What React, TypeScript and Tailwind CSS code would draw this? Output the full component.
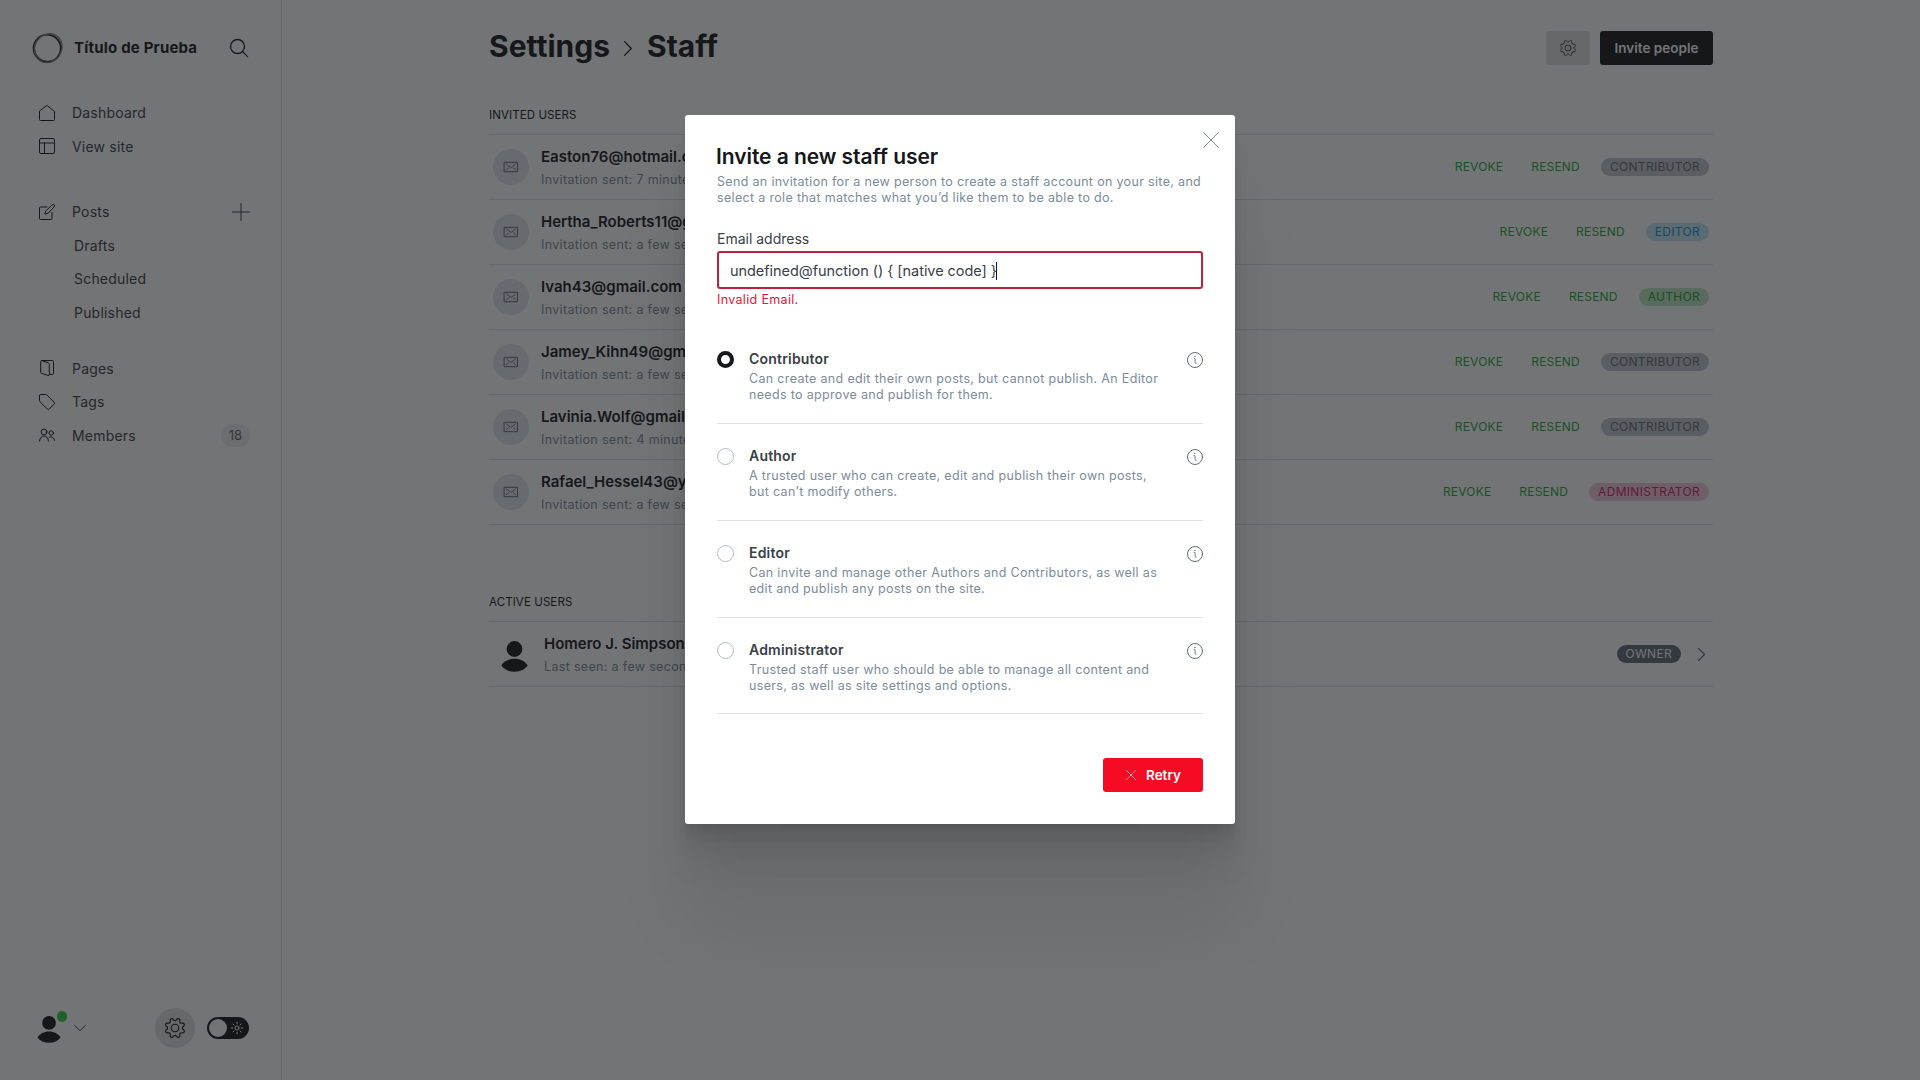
import React from "react";

const GEAR =
  "M10.546 2.438a1.957 1.957 0 0 0 2.908 0L14.4 1.4a1.959 1.959 0 0 1 3.41 1.413l-.071 1.4a1.958 1.958 0 0 0 2.051 2.054l1.4-.071a1.959 1.959 0 0 1 1.41 3.41l-1.042.94a1.96 1.96 0 0 0 0 2.909l1.042.94a1.959 1.959 0 0 1-1.413 3.41l-1.4-.071a1.958 1.958 0 0 0-2.056 2.056l.071 1.4A1.959 1.959 0 0 1 14.4 22.6l-.941-1.041a1.959 1.959 0 0 0-2.908 0L9.606 22.6A1.959 1.959 0 0 1 6.2 21.192l.072-1.4a1.958 1.958 0 0 0-2.056-2.056l-1.4.071A1.958 1.958 0 0 1 1.4 14.4l1.041-.94a1.96 1.96 0 0 0 0-2.909L1.4 9.606A1.958 1.958 0 0 1 2.809 6.2l1.4.071a1.958 1.958 0 0 0 2.058-2.06L6.2 2.81A1.959 1.959 0 0 1 9.606 1.4z";

type IconProps = { className?: string; box?: string; width?: number; children: React.ReactNode };

function Icon({ className = "size-4", box = "0 0 16 16", width = 1, children }: IconProps) {
  return (
    <svg
      className={`block shrink-0 overflow-visible ${className}`}
      viewBox={box}
      fill="none"
      stroke="currentColor"
      strokeWidth={width}
      strokeLinecap="round"
      strokeLinejoin="round"
    >
      {children}
    </svg>
  );
}

const Gear = ({ className, width }: { className: string; width: number }) => (
  <Icon className={className} box="0 0 24 24" width={width}>
    <path d={GEAR} />
    <circle cx="12" cy="12" r="4.5" />
  </Icon>
);

const Person = ({ className }: { className: string }) => (
  <svg className={`block shrink-0 ${className}`} viewBox="0 0 27 31" fill="#15171a">
    <circle cx="13.5" cy="8" r="7.9" />
    <path d="M.3 24.6C3 20.3 7.500 17.800 13.500 17.800s10.500 2.500 13.200 6.800c-2.900 3.900-7.500 6.200-13.200 6.200S3.200 28.500.3 24.600z" />
  </svg>
);

function NavItem({ icon, label, children }: { icon: React.ReactNode; label: string; children?: React.ReactNode }) {
  return (
    <div className="flex h-[33.5px] items-center pl-[39px] pr-[31px]">
      <span className="w-[33px] text-[#15171a]">{icon}</span>
      <span className="flex-1 tracking-[0.2px]">{label}</span>
      {children}
    </div>
  );
}

function Sidebar() {
  return (
    <aside className="flex w-[282px] shrink-0 flex-col border-r border-[#e6e9eb] text-[14px] text-[#394047]">
      <div className="mt-[31px] flex h-[34px] items-center pl-8">
        <Icon className="size-8" box="0 0 32 32" width={1.2}>
          <circle cx="15" cy="16.300" r="13.600" stroke="#15171a" strokeWidth="1.400" />
          <circle cx="16" cy="15.800" r="13.600" stroke="#3c4044" strokeWidth="1" />
          <ellipse cx="16.300" cy="16" rx="13.300" ry="15" stroke="#7b8086" strokeWidth="1.200" transform="rotate(35 16 16)" />
        </Icon>
        <span className="ml-[10px] w-[155.5px] text-[15px] font-bold tracking-[0.2px] text-[#15171a]">Título de Prueba</span>
        <Icon className="size-[18px] text-[#15171a]" box="0 0 18 18" width={1.3}>
          <circle cx="7.500" cy="7.500" r="7" />
          <path d="M12.600 12.600l5 5" />
        </Icon>
      </div>
      <nav className="mt-[31px]">
        <NavItem
          label="Dashboard"
          icon={
            <Icon>
              <path d="M.5 6.500v8a1 1 0 0 0 1 1h13a1 1 0 0 0 1-1v-8L8.600.800a1 1 0 0 0-1.200 0z" />
            </Icon>
          }
        />
        <NavItem
          label="View site"
          icon={
            <Icon>
              <rect x=".5" y=".5" width="15" height="15" rx="1.500" />
              <path d="M.5 5h15M5.500 5v10.500" />
            </Icon>
          }
        />
        <div className="h-8" />
        <NavItem
          label="Posts"
          icon={
            <Icon>
              <path d="M8 3H1.500a1 1 0 0 0-1 1v10.500a1 1 0 0 0 1 1H12a1 1 0 0 0 1-1V8.500" />
              <path d="M8.800 9.300l-3 .9.800-3.100 6.600-6.300a1.350 1.350 0 0 1 2 2z" />
            </Icon>
          }
        >
          <Icon className="size-[18px] text-[#394047]" box="0 0 18 18">
            <path d="M9 .5v17M.5 9h17" />
          </Icon>
        </NavItem>
        {["Drafts", "Scheduled", "Published"].map((label) => (
          <div key={label} className="flex h-[33.5px] items-center pl-[74px] tracking-[0.2px]">
            {label}
          </div>
        ))}
        <div className="h-[22.5px]" />
        <NavItem
          label="Pages"
          icon={
            <Icon className="-mt-px size-4">
              <path d="M2.500.5h11a1 1 0 0 1 1 1v12a1 1 0 0 1-1 1h-3" />
              <path d="M2.500.5l6.800 2.300a1.500 1.500 0 0 1 1 1.400v10.500a.9.900 0 0 1-1.200.8l-6.600-2.200a1 1 0 0 1-.8-1V1.500a1 1 0 0 1 .8-1z" />
            </Icon>
          }
        />
        <NavItem
          label="Tags"
          icon={
            <Icon>
              <path d="M.5 1.500v5c0 .5.200.9.500 1.300l7.300 7.200a1.300 1.300 0 0 0 1.900 0l4.900-4.900a1.300 1.300 0 0 0 0-1.900L7.900 1a1.700 1.700 0 0 0-1.300-.5h-5a1 1 0 0 0-1.100 1z" />
            </Icon>
          }
        />
        <NavItem
          label="Members"
          icon={
            <Icon>
              <circle cx="5" cy="5" r="2.900" />
              <circle cx="12.200" cy="6" r="2.200" />
              <path d="M.5 14c.3-3 2-5 4.500-5s4.200 2 4.500 5M10.500 10.200c2.700-.9 4.800.6 5 3.300" />
            </Icon>
          }
        >
          <span className="flex h-[23px] w-[29px] items-center justify-center rounded-full bg-[#ebeef0] text-[13px] text-[#626d79]">
            18
          </span>
        </NavItem>
      </nav>
      <div className="mb-8 mt-auto flex h-10 items-center pl-8">
        <div className="relative flex size-[34px] items-center justify-center rounded-full">
          <Person className="mt-0.5 h-[27px] w-[24px]" />
          <span className="absolute -right-px top-0 size-[10.5px] rounded-full bg-[#30cf43]" />
        </div>
        <Icon className="ml-2 h-1.5 w-3 text-[#394047]" box="0 0 12 6">
          <path d="M.5.3L6 5.700 11.500.3" />
        </Icon>
        <div className="ml-[69px] flex size-10 items-center justify-center rounded-full bg-[#dfe1e3] text-[#15171a]">
          <Gear className="size-5" width={1.4} />
        </div>
        <div className="ml-3 flex h-[22px] w-[42px] items-center justify-between rounded-full bg-[#15171a] pl-0.5 pr-[6px] text-white">
          <span className="size-[18px] rounded-full bg-white" />
          <Icon className="size-3" box="0 0 12 12">
            <circle cx="6" cy="6" r="2" />
            <path d="M6 .3v1.500M6 10.200v1.500M.3 6h1.500M10.200 6h1.500M2 2l1 1M9 9l1 1M2 10l1-1M9 3l1-1" />
          </Icon>
        </div>
      </div>
    </aside>
  );
}

const BADGES = {
  CONTRIBUTOR: "bg-[#c0c6ce] text-[#626d79]",
  EDITOR: "bg-[#c5e6f5] text-[#0d96d6]",
  AUTHOR: "bg-[#bfe6c2] text-[#269a36]",
  ADMINISTRATOR: "bg-[#efc8d9] text-[#e0146e]",
  OWNER: "bg-[#626d79] text-white",
};

function Badge({ role }: { role: keyof typeof BADGES }) {
  return (
    <span className={`flex h-[18px] items-center rounded-full px-[9px] text-[12px] tracking-[0.3px] ${BADGES[role]}`}>{role}</span>
  );
}

const INVITES: { email: string; sent: string; role: keyof typeof BADGES }[] = [
  { email: "Easton76@hotmail.com", sent: "7 minutes ago", role: "CONTRIBUTOR" },
  { email: "Hertha_Roberts11@gmail.com", sent: "a few seconds ago", role: "EDITOR" },
  { email: "Ivah43@gmail.com", sent: "a few seconds ago", role: "AUTHOR" },
  { email: "Jamey_Kihn49@gmail.com", sent: "a few seconds ago", role: "CONTRIBUTOR" },
  { email: "Lavinia.Wolf@gmail.com", sent: "4 minutes ago", role: "CONTRIBUTOR" },
  { email: "Rafael_Hessel43@yahoo.com", sent: "a few seconds ago", role: "ADMINISTRATOR" },
];

function UserText({ name, detail }: { name: string; detail: string }) {
  return (
    <div className="flex flex-1 flex-col gap-[3px] pt-[3px] leading-5">
      <span className="text-[15px] font-semibold text-[#15171a]">{name}</span>
      <span className="text-[12.5px] tracking-[0.33px] text-[#7c8b9a]">{detail}</span>
    </div>
  );
}

function StaffPage() {
  return (
    <main className="flex flex-1 flex-col pl-[207px]">
      <header className="mt-[31px] flex h-[34px] w-[1224px] items-center">
        <h1 className="flex items-center pb-[5px] text-[30px] font-bold leading-none text-[#15171a]">
          <span className="w-[135px]">Settings</span>
          <Icon className="mt-[5px] h-[15px] w-2" box="0 0 8 15" width={1.3}>
            <path d="M.6.6L7.300 7.500.6 14.400" />
          </Icon>
          <span className="ml-[15px]">Staff</span>
        </h1>
        <div className="ml-auto flex h-[34px] w-11 items-center justify-center rounded-[3px] bg-[#dfe1e3] text-[#394047]">
          <Gear className="size-4" width={1.5} />
        </div>
        <div className="ml-2.5 flex h-[34px] w-[113px] items-center justify-center rounded-[3px] bg-[#15171a] text-[13.5px] font-semibold text-white">
          Invite people
        </div>
      </header>
      <section className="mt-10 w-[1224px]">
        <h2 className="flex h-[29px] items-start pt-[2px] text-[11.5px] leading-4 tracking-[0.1px] text-[#15171a]">INVITED USERS</h2>
        {INVITES.map((u) => (
          <div key={u.email} className="flex h-[65.05px] items-center border-t border-[#dfe3e6] pl-1 pr-[4px]">
            <div className="mr-3 flex size-9 items-center justify-center rounded-full bg-[#e0e8f0] text-[#5f6c80]">
              <Icon className="h-[10px] w-[14px]" box="0 0 14 10">
                <rect x=".5" y=".3" width="13" height="9.400" />
                <path d="M2.500 2l3.800 3a1.200 1.200 0 0 0 1.400 0l3.800-3M2.500 7.500l2-1.500M11.500 7.500l-2-1.500" strokeWidth=".9" />
              </Icon>
            </div>
            <UserText name={u.email} detail={`Invitation sent: ${u.sent}`} />
            <div className="flex items-center text-[12px] tracking-[0.2px] text-[#26a838]">
              <span>REVOKE</span>
              <span className="ml-7 mr-[21px]">RESEND</span>
              <Badge role={u.role} />
            </div>
          </div>
        ))}
        <div className="border-t border-[#dfe3e6]" />
      </section>
      <section className="mt-[69px] w-[1224px]">
        <h2 className="flex h-[27px] items-start text-[11.5px] leading-4 tracking-[0.1px] text-[#15171a]">ACTIVE USERS</h2>
        <div className="flex h-[66px] items-center border-y border-[#dfe3e6] pr-2">
          <div className="flex w-[55px] pl-3 pt-1">
            <Person className="h-[31px] w-[27px]" />
          </div>
          <UserText name="Homero J. Simpson" detail="Last seen: a few seconds ago" />
          <Badge role="OWNER" />
          <Icon className="ml-[17px] h-[13px] w-[7px] text-[#626d79]" box="0 0 7 13" width={1.2}>
            <path d="M.5.5l6 6-6 6" />
          </Icon>
        </div>
      </section>
    </main>
  );
}

const ROLES = [
  {
    name: "Contributor",
    text: "Can create and edit their own posts, but cannot publish. An Editor needs to approve and publish for them.",
    row: "h-[98px] pt-6",
  },
  {
    name: "Author",
    text: "A trusted user who can create, edit and publish their own posts, but can’t modify others.",
    row: "h-[97px] pt-[23px]",
  },
  {
    name: "Editor",
    text: "Can invite and manage other Authors and Contributors, as well as edit and publish any posts on the site.",
    row: "h-[97px] pt-[23px]",
  },
  {
    name: "Administrator",
    text: "Trusted staff user who should be able to manage all content and users, as well as site settings and options.",
    row: "h-[96px] pt-[23px]",
  },
];

const Cross = ({ className, width }: { className: string; width: number }) => (
  <Icon className={className} width={width}>
    <path d="M.5.5l15 15M15.500.5l-15 15" />
  </Icon>
);

function InviteModal() {
  return (
    <div className="relative mt-[115px] flex h-[709px] w-[550px] flex-col rounded-[3px] bg-white px-8 shadow-[0_2.8px_2.2px_rgba(0,0,0,0.02),0_6.7px_5.3px_rgba(0,0,0,0.028),0_12.5px_10px_rgba(0,0,0,0.035),0_22.3px_17.9px_rgba(0,0,0,0.042),0_41.8px_33.4px_rgba(0,0,0,0.05),0_100px_80px_rgba(0,0,0,0.07)]">
      <Cross className="absolute right-4 top-[17px] size-4 text-[#626d79]" width={0.8} />
      <h2 className="-ml-px mt-[29px] h-[29px] whitespace-nowrap text-[21px] font-semibold leading-[26px] tracking-[-0.05px] text-[#15171a]">
        Invite a new staff user
      </h2>
      <p className="mt-px w-[490px] text-[12.5px] leading-4 tracking-[0.33px] text-[#7c8b9a]">
        Send an invitation for a new person to create a staff account on your site, and select a role that matches what
        you’d like them to be able to do.
      </p>
      <label className="mt-[23px] text-[14px] leading-5 text-[#394047]">Email address</label>
      <div className="mt-0.5 flex h-[38px] items-center rounded-[3px] border-2 border-[#be2138] pl-[11px] pt-0.5 text-[14.5px] tracking-[-0.05px] text-[#394047]">
        <span>{"undefined@function () { [native code] }"}</span>
        <span className="-ml-px h-[18px] w-px bg-[#15171a]" />
      </div>
      <p className="mt-[3px] text-[12.5px] leading-4 tracking-[0.33px] text-[#e01535]">Invalid Email.</p>
      <div className="mt-[18px]">
        {ROLES.map(({ name, text, row }, i) => (
          <div key={name} className={`flex border-b border-[#dfe2e5] ${row}`}>
            <span
              className={
                i === 0
                  ? "mt-px size-[17px] rounded-full border-4 border-[#15171a]"
                  : "mt-px size-[17px] rounded-full border border-[#b4bcc4]"
              }
            />
            <div className="ml-[15px] w-[416px]">
              <div className="text-[14px] font-semibold leading-[18px] tracking-[0.2px] text-[#394047]">{name}</div>
              <p className="mt-[3px] text-[12.5px] leading-4 tracking-[0.33px] text-[#7c8b9a]">{text}</p>
            </div>
            <Icon className="ml-auto mt-[2px] size-4 text-[#626d79]">
              <circle cx="8" cy="8" r="7.500" />
              <path d="M7 6.500h.6a.5.500 0 0 1 .5.500v3.500a.8.800 0 0 0 .8.800h.3" strokeWidth=".9" />
              <circle cx="7.800" cy="4.500" r=".25" strokeWidth=".6" />
            </Icon>
          </div>
        ))}
      </div>
      <button className="ml-auto mt-11 flex h-[34px] w-[100px] items-center rounded-[3px] bg-[#f50b23] pl-[23px] text-[13.5px] font-semibold text-white">
        <Cross className="mr-2.5 size-[10px]" width={1} />
        Retry
      </button>
    </div>
  );
}

export default function App() {
  return (
    <div className="relative flex h-screen w-screen overflow-hidden bg-white font-['Inter',sans-serif]">
      <Sidebar />
      <StaffPage />
      <div className="absolute inset-0 flex items-start justify-center bg-[#15171a]/60">
        <InviteModal />
      </div>
    </div>
  );
}
